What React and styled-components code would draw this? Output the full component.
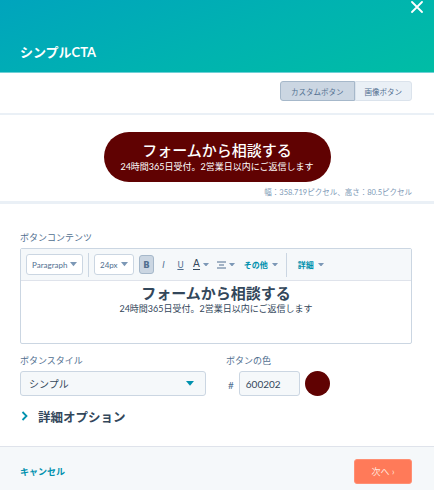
import React from "react";
import styled, { createGlobalStyle } from "styled-components";

const Global = createGlobalStyle`
  html, body { margin: 0; padding: 0; }
  body {
    width: 434px;
    height: 490px;
    overflow: hidden;
    background: #fff;
    font-family: Lato, "Noto Sans CJK JP", sans-serif;
    color: #33475b;
  }
  * { box-sizing: border-box; }
`;

const Caret = ({ color = "#7c98b6", size = 7 }) => (
  <svg width={size} height={size * 0.6} viewBox="0 0 10 6">
    <path d="M0 0 L10 0 L5 6 Z" fill={color} />
  </svg>
);

const App = () => (
  <Modal>
    <Global />
    <Header>
      <Title>シンプルCTA</Title>
      <Close>
        <svg width="12" height="12" viewBox="0 0 12 12">
          <path d="M1 1 L11 11 M11 1 L1 11" stroke="#fff" strokeWidth="1.8" strokeLinecap="round" />
        </svg>
      </Close>
    </Header>

    <ToggleRow>
      <Toggle $active>カスタムボタン</Toggle>
      <Toggle>画像ボタン</Toggle>
    </ToggleRow>

    <Preview>
      <CtaButton>
        <CtaMain>フォームから相談する</CtaMain>
        <CtaSub>24時間365日受付。2営業日以内にご返信します</CtaSub>
      </CtaButton>
      <Dimensions>幅：358.719ピクセル、高さ：80.5ピクセル</Dimensions>
    </Preview>

    <Body>
      <Label>ボタンコンテンツ</Label>
      <Editor>
        <Toolbar>
          <Select $w={57}>
            Paragraph <Caret />
          </Select>
          <Sep />
          <Select $w={40}>
            24px <Caret />
          </Select>
          <ToolBtn $active $bold>B</ToolBtn>
          <ToolBtn $italic>I</ToolBtn>
          <ToolBtn $underline>U</ToolBtn>
          <ToolBtn>
            <ColorA>A</ColorA>
            <Caret size={6} />
          </ToolBtn>
          <ToolBtn>
            <svg width="9" height="8" viewBox="0 0 9 8">
              <path d="M0 1 H9 M2 4 H7 M0 7 H9" stroke="#516f90" strokeWidth="1" />
            </svg>
            <Caret size={6} />
          </ToolBtn>
          <LinkMenu>
            その他 <Caret size={6} />
          </LinkMenu>
          <Sep />
          <LinkMenu>
            詳細 <Caret size={6} />
          </LinkMenu>
        </Toolbar>
        <EditorContent>
          <EdMain>フォームから相談する</EdMain>
          <EdSub>24時間365日受付。2営業日以内にご返信します</EdSub>
        </EditorContent>
      </Editor>

      <FieldRow>
        <Field>
          <Label>ボタンスタイル</Label>
          <Dropdown>
            シンプル
            <Caret color="#0091ae" size={8} />
          </Dropdown>
        </Field>
        <Field>
          <Label>ボタンの色</Label>
          <ColorRow>
            <Hash>#</Hash>
            <HexInput>600202</HexInput>
            <Swatch $color="#600202" />
          </ColorRow>
        </Field>
      </FieldRow>

      <Advanced>
        <svg width="7" height="10" viewBox="0 0 7 10">
          <path d="M1.5 1 L5.5 5 L1.5 9" stroke="#0091ae" strokeWidth="1.8" fill="none" />
        </svg>
        <span>詳細オプション</span>
      </Advanced>
    </Body>

    <Footer>
      <Cancel>キャンセル</Cancel>
      <Next>次へ ›</Next>
    </Footer>
  </Modal>
);

export default App;

const Modal = styled.div`
  width: 434px;
  height: 490px;
  display: flex;
  flex-direction: column;
  position: relative;
`;

const Header = styled.div`
  height: 73px;
  flex-shrink: 0;
  background: linear-gradient(160deg, #00a4bd 0%, #00b3b0 55%, #00bda5 100%);
  border-bottom: 1px solid #6fd0d6;
  display: flex;
  align-items: flex-end;
  padding: 0 20px 11px;
`;

const Title = styled.h1`
  margin: 0;
  font-size: 13px;
  line-height: 18px;
  font-weight: 700;
  color: #fff;
`;

const Close = styled.div`
  position: absolute;
  top: 1px;
  right: 11px;
  width: 12px;
  height: 12px;
  display: flex;
`;

const ToggleRow = styled.div`
  height: 42px;
  flex-shrink: 0;
  display: flex;
  justify-content: flex-end;
  align-items: flex-start;
  padding: 8px 22px 0 0;
  border-bottom: 2px solid #eaf0f6;
`;

const Toggle = styled.div`
  height: 20px;
  padding: 0 ${(p) => (p.$active ? "10px" : "9px")};
  display: flex;
  align-items: center;
  font-size: 7.5px;
  color: #516f90;
  background: ${(p) => (p.$active ? "#cbd6e2" : "#eaf0f6")};
  border: 1px solid ${(p) => (p.$active ? "#a6b8ca" : "#dbe3ec")};
  border-radius: ${(p) => (p.$active ? "3px 0 0 3px" : "0 3px 3px 0")};
`;

const Preview = styled.div`
  height: 89px;
  flex-shrink: 0;
  display: flex;
  flex-direction: column;
  align-items: center;
  padding: 17px 22px 0;
  border-bottom: 3px solid #eaf0f6;
`;

const CtaButton = styled.div`
  width: 227px;
  height: 50px;
  border-radius: 25px;
  background: #600202;
  color: #fff;
  display: flex;
  flex-direction: column;
  align-items: center;
  justify-content: center;
  gap: 1px;
`;

const CtaMain = styled.div`
  font-size: 15px;
  line-height: 19px;
  font-weight: 500;
`;

const CtaSub = styled.div`
  font-size: 9px;
  line-height: 12px;
`;

const Dimensions = styled.div`
  align-self: flex-end;
  margin-top: 5px;
  font-size: 7.5px;
  line-height: 12px;
  color: #7c98b6;
`;

const Body = styled.div`
  flex: 1;
  padding: 28px 22px 0 20px;
  display: flex;
  flex-direction: column;
`;

const Label = styled.div`
  font-size: 9px;
  line-height: 12px;
  color: #516f90;
  margin-bottom: 4px;
`;

const Editor = styled.div`
  border: 1px solid #cbd6e2;
  border-radius: 2px;
  height: 96px;
  display: flex;
  flex-direction: column;
`;

const Toolbar = styled.div`
  height: 32px;
  background: #f5f8fa;
  border-bottom: 1px solid #dfe3eb;
  display: flex;
  align-items: center;
  padding: 0 5px;
`;

const Select = styled.div`
  width: ${(p) => p.$w}px;
  height: 21px;
  background: #fff;
  border: 1px solid #cbd6e2;
  border-radius: 3px;
  display: flex;
  align-items: center;
  justify-content: space-between;
  padding: 0 5px;
  font-size: 8px;
  color: #516f90;
`;

const Sep = styled.div`
  width: 1px;
  height: 24px;
  background: #cbd6e2;
  margin: 0 5px;
`;

const ToolBtn = styled.div`
  height: 19px;
  min-width: 15px;
  margin-left: ${(p) => (p.$active ? "5px" : "2px")};
  padding: 0 2px;
  display: flex;
  align-items: center;
  justify-content: center;
  gap: 3px;
  border-radius: 3px;
  background: ${(p) => (p.$active ? "#cbd6e2" : "transparent")};
  border: 1px solid ${(p) => (p.$active ? "#a6b8ca" : "transparent")};
  font-family: "DejaVu Sans", sans-serif;
  font-size: 8.5px;
  font-weight: ${(p) => (p.$bold ? 700 : 400)};
  font-style: ${(p) => (p.$italic ? "italic" : "normal")};
  text-decoration: ${(p) => (p.$underline ? "underline" : "none")};
  color: #516f90;
  & + & {
    margin-left: 2px;
  }
`;

const ColorA = styled.span`
  font-size: 10px;
  line-height: 10px;
  color: #33475b;
  border-bottom: 1.5px solid #33475b;
`;

const LinkMenu = styled.div`
  display: flex;
  align-items: center;
  gap: 4px;
  margin-left: 6px;
  font-size: 8px;
  font-weight: 700;
  color: #0091ae;
  & + div {
    margin-left: 8px;
  }
`;

const EditorContent = styled.div`
  flex: 1;
  display: flex;
  flex-direction: column;
  align-items: center;
  padding-top: 3px;
  color: #33475b;
`;

const EdMain = styled.div`
  font-size: 15px;
  line-height: 19px;
  font-weight: 700;
`;

const EdSub = styled.div`
  font-size: 9px;
  line-height: 12px;
`;

const FieldRow = styled.div`
  display: flex;
  gap: 20px;
  margin-top: 11px;
`;

const Field = styled.div`
  display: flex;
  flex-direction: column;
`;

const Dropdown = styled.div`
  width: 186px;
  height: 25px;
  background: #f5f8fa;
  border: 1px solid #cbd6e2;
  border-radius: 3px;
  display: flex;
  align-items: center;
  justify-content: space-between;
  padding: 0 11px 0 8px;
  font-size: 10px;
  color: #33475b;
`;

const ColorRow = styled.div`
  display: flex;
  align-items: center;
`;

const Hash = styled.span`
  font-size: 10px;
  color: #516f90;
  margin: 2px 5px 0 2px;
`;

const HexInput = styled.div`
  width: 61px;
  height: 25px;
  background: #f5f8fa;
  border: 1px solid #cbd6e2;
  border-radius: 3px;
  display: flex;
  align-items: center;
  padding: 0 6px;
  font-size: 10px;
  color: #33475b;
`;

const Swatch = styled.div`
  width: 25px;
  height: 25px;
  border-radius: 50%;
  background: ${(p) => p.$color};
  margin-left: 5px;
`;

const Advanced = styled.div`
  display: flex;
  align-items: center;
  gap: 10px;
  margin-top: 10px;
  padding-left: 1px;
  font-size: 12.5px;
  font-weight: 700;
  color: #33475b;
  height: 20px;
`;

const Footer = styled.div`
  height: 44px;
  flex-shrink: 0;
  background: #f5f8fa;
  border-top: 1px solid #dfe3eb;
  display: flex;
  align-items: center;
  justify-content: space-between;
  padding: 0 22px 0 20px;
`;

const Cancel = styled.div`
  font-size: 9px;
  font-weight: 700;
  color: #0091ae;
  margin-top: 6px;
`;

const Next = styled.div`
  width: 58px;
  height: 25px;
  background: #ff7a59;
  border: 1px solid #ff8f73;
  border-radius: 3px;
  color: #ffe6de;
  font-size: 9px;
  display: flex;
  align-items: center;
  justify-content: center;
  margin-top: 6px;
`;
